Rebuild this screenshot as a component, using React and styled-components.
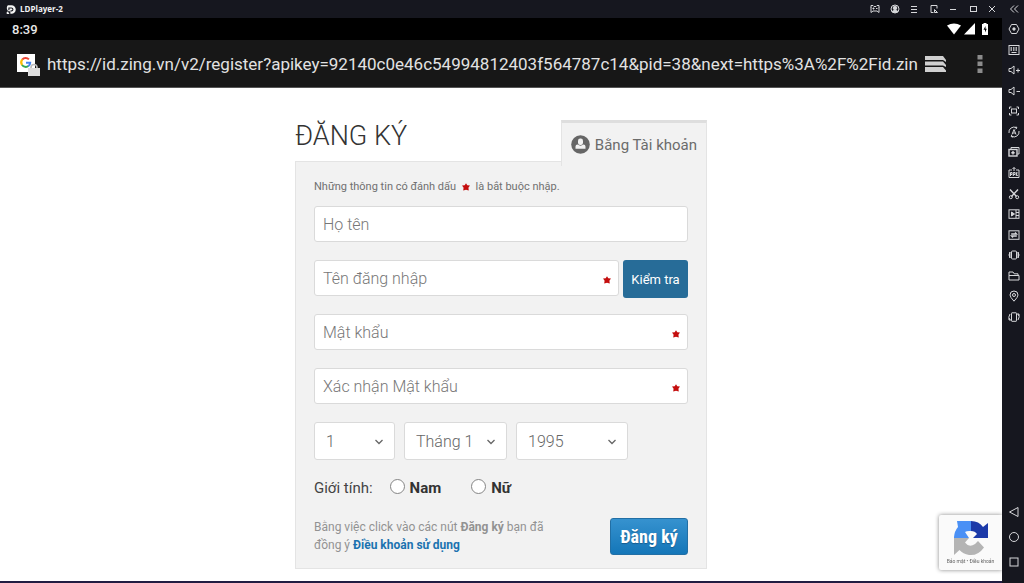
import React from "react";
import styled, { createGlobalStyle, css } from "styled-components";

const GlobalStyle = createGlobalStyle`
  * { box-sizing: border-box; }
  html, body { margin: 0; background: #16171f; }
  body, button, input, select { font-family: Roboto, "Noto Sans", sans-serif; }
`;

const Shell = styled.div`
  display: flex;
  min-height: 100vh;
  background: #16171f;
`;
const Main = styled.div`
  flex: 1;
  min-width: 0;
  display: flex;
  flex-direction: column;
  border-bottom: 2px solid #211c42;
`;
const TitleBar = styled.header`
  height: 18px;
  display: flex;
  align-items: center;
  justify-content: space-between;
  padding: 0 4px 0 6px;
  color: #f2f2f4;
  background: #16171f;
`;
const AppName = styled.div`
  display: flex;
  align-items: center;
  gap: 4px;
  font: 700 8px/12px "Open Sans", sans-serif;
`;
const WindowControls = styled.div`
  display: flex;
  width: 129px;
  justify-content: space-between;
`;
const IconButton = styled.button`
  display: flex;
  align-items: center;
  justify-content: center;
  width: 12px;
  height: 12px;
  padding: 0;
  border: 0;
  background: none;
  color: #d6d7da;
`;
const StatusBar = styled.div`
  height: 22px;
  display: flex;
  align-items: center;
  justify-content: space-between;
  padding: 0 12px;
  background: #000;
  color: #e8e8e8;
  font-size: 13px;
  font-weight: 500;
`;
const StatusIcons = styled.div`
  display: flex;
  align-items: center;
  gap: 3px;
`;
const AddressBar = styled.div`
  height: 48px;
  display: flex;
  align-items: center;
  padding: 0 11px 0 16px;
  background: #171717;
  border-bottom: 1px solid #555;
`;
const Url = styled.input`
  flex: 1;
  min-width: 0;
  height: 30px;
  margin: 0 3px 0 7px;
  padding: 0;
  border: 0;
  outline: 0;
  background: none;
  color: #e2e2e2;
  font-size: 17px;
`;
const BarButton = styled(IconButton)`
  width: 22px;
  height: 24px;
`;
const MenuButton = styled(BarButton)`
  margin-left: 22px;
`;

const Content = styled.main`
  flex: 1;
  background: #fff;
  padding: 32px 16px 12px;
`;
const Register = styled.div`
  max-width: 412px;
  margin: 0 auto;
`;
const Head = styled.div`
  display: flex;
  justify-content: space-between;
  align-items: flex-start;
`;
const Heading = styled.h1`
  margin: 0;
  color: #333;
  font-size: 27px;
  font-weight: 300;
  line-height: 32px;
`;
const Tab = styled.a`
  display: flex;
  align-items: center;
  gap: 5px;
  height: 46px;
  margin-bottom: -5px;
  padding: 0 9px;
  border: 1px solid #e4e4e4;
  border-top: 3px solid #dedede;
  border-bottom: 0;
  background: #f2f2f2;
  color: #6b6b6b;
  font-size: 15px;
  text-decoration: none;
  z-index: 1;
`;
const Panel = styled.form`
  padding: 16px 18px 13px;
  border: 1px solid #e4e4e4;
  background: #f2f2f2;
`;
const Note = styled.p`
  margin: 0 0 11px;
  color: #707070;
  font-size: 11px;
  line-height: 17px;
`;
const NoteStar = styled.span`
  margin: 0 3px;
  svg { vertical-align: -1px; }
`;
const Row = styled.div`
  display: flex;
  gap: ${(p) => p.$gap || 0}px;
  height: 36px;
  margin-bottom: 18px;
`;
const FieldBox = styled.label`
  position: relative;
  flex: 1;
  min-width: 0;
`;
const RequiredMark = styled.span`
  position: absolute;
  right: 8px;
  top: 16px;
  display: flex;
`;
const boxStyle = css`
  width: 100%;
  border: 1px solid #dadada;
  border-radius: 3px;
  background: #fff;
  font-size: 16px;
  font-weight: 300;
`;
const Input = styled.input`
  ${boxStyle}
  height: 36px;
  padding: 0 8px;
  display: block;
  color: #333;
  &::placeholder { color: #777; opacity: 1; }
`;
const CheckButton = styled.button`
  width: 65px;
  height: 38px;
  padding: 0;
  border: 0;
  border-radius: 3px;
  background: #276c98;
  color: #fff;
  font-size: 13px;
`;
const SelectBox = styled.label`
  position: relative;
  width: ${(p) => p.$width}px;
`;
const Select = styled.select`
  ${boxStyle}
  appearance: none;
  height: 38px;
  padding: 0 11px;
  color: #666;
`;
const Chevron = styled.svg`
  position: absolute;
  right: 11px;
  top: 15px;
  width: 10px;
  height: 10px;
  pointer-events: none;
`;
const Gender = styled.fieldset`
  display: flex;
  align-items: center;
  height: 20px;
  margin: 20px 0;
  padding: 0;
  border: 0;
  color: #444;
  font-size: 15px;
`;
const GenderTitle = styled.span`
  margin-right: 17px;
`;
const Choice = styled.label`
  display: flex;
  align-items: center;
  gap: 5px;
  margin-right: 30px;
  color: #333;
  font-weight: 700;
`;
const Radio = styled.input`
  appearance: none;
  width: 15px;
  height: 15px;
  margin: 0 0 4px;
  border: 1px solid #858585;
  border-radius: 50%;
  background: #fff;
  &:checked { box-shadow: inset 0 0 0 3px #fff; background: #276c98; }
`;
const Footer = styled.div`
  display: flex;
  justify-content: space-between;
  align-items: flex-start;
`;
const Terms = styled.p`
  margin: 0;
  max-width: 240px;
  color: #929292;
  font-size: 12px;
  line-height: 18px;
  a { color: #1b72b0; font-weight: 700; text-decoration: none; }
`;
const Submit = styled.button`
  width: 78px;
  height: 37px;
  padding: 0;
  border: 1px solid #226fa5;
  border-radius: 3px;
  background: linear-gradient(#3692cf, #1476b8);
  color: #fff;
  font-family: "Roboto Condensed", Roboto, sans-serif;
  font-size: 18px;
  font-weight: 700;
  text-shadow: 0 1px 1px #185d8e;
`;

const SideBar = styled.aside`
  width: 22px;
  display: flex;
  flex-direction: column;
  align-items: center;
  justify-content: space-between;
  padding: 3px 0 15px 2px;
`;
const Tools = styled.div`
  display: flex;
  flex-direction: column;
  gap: 8px;
`;
const ToolList = styled(Tools)`
  height: 300px;
  gap: 0;
  justify-content: space-between;
`;
const NavList = styled(Tools)`
  gap: 13px;
`;
const Captcha = styled.aside`
  position: fixed;
  right: 22px;
  bottom: 13px;
  width: 63px;
  height: 55px;
  display: flex;
  flex-direction: column;
  align-items: center;
  padding-top: 5px;
  border-radius: 2px 0 0 2px;
  background: #fafafa;
  box-shadow: 0 0 4px #888;
  clip-path: inset(-6px 0 -6px -6px);
  color: #666;
  font-size: 5px;
  line-height: 8px;
  white-space: nowrap;
  svg { margin-bottom: 1px; }
  a { color: inherit; text-decoration: none; }
`;

const Star = () => (
  <svg width="8" height="8" viewBox="0 0 8 8" aria-hidden="true">
    <path d="M4 0.2 5.3 2.2 8 2.6 6.4 4.7 6.8 7.6 4 6.7 1.2 7.6 1.6 4.7 0 2.6 2.7 2.2Z" fill="#c40d0d" />
  </svg>
);
const Line = ({ children }) => (
  <svg width="12" height="12" viewBox="0 0 12 12" fill="none" stroke="currentColor" strokeWidth="1" aria-hidden="true">
    {children}
  </svg>
);

const windowIcons = [
  ["Trò chơi", <path d="M2 4.5V9.5L4 8H8L10 9.5V4.5M2 5V2.5H4L5 3.5H7L8 2.5H10V5M3.5 5.5H5.5M4.5 4.5V6.5M7 5.5H8.5" />],
  ["Tài khoản", <><circle cx="6" cy="6" r="4" /><circle cx="6" cy="5" r="1.8" fill="currentColor" /><path d="M3 8.5Q6 5.5 9 8.5Q6 10.5 3 8.5Z" fill="currentColor" /></>],
  ["Trình đơn", <path d="M3 3.5H9M3 6.5H9M3 9.5H9" />],
  ["Cửa sổ nhỏ", <path d="M9 5.5V2.5H3V9.5H5.5M9.5 9.5H6.5V6.5M6.5 6.5L9.5 9.5" />],
  ["Thu nhỏ", <path d="M3 6.5H9" />],
  ["Phóng to", <rect x="3.5" y="3.5" width="6" height="5" />],
  ["Đóng", <path d="M3 3L9 9M9 3L3 9" />],
];
const tools = [
  ["Cài đặt", <><path d="M3.5 1.5H8.5L11 6L8.5 10.5H3.5L1 6Z" /><circle cx="6" cy="6" r="1.2" fill="currentColor" /></>],
  ["Bàn phím", <><rect x="1" y="1.5" width="10" height="9" /><path d="M2.5 4H9.5M2.5 6H9.5" strokeDasharray="1.5 1" strokeWidth="1.3" /><path d="M3.5 8.5H8.5" /></>],
  ["Tăng âm lượng", <path d="M1 4.5V7.5H3L6 10V2L3 4.5ZM8 6.5H12M10 4.5V8.5" />],
  ["Giảm âm lượng", <path d="M1 4.5V7.5H3L6 10V2L3 4.5ZM8.5 6.5H12" />],
  ["Toàn màn hình", <><rect x="3.5" y="4" width="5" height="4" /><path d="M1.5 4V2H3.5M8.5 2H10.5V4M10.5 8V10H8.5M3.5 10H1.5V8" /></>],
  ["Tự động", <><path d="M1 7A5 5 0 0 1 8.5 1.8M11 5A5 5 0 0 1 3.5 10.2M8 .5L9 2L7.5 3M4 9L3 10.2L4.5 11.5" /><path d="M4 8.5L6 3.5L8 8.5M4.7 7H7.3" /></>],
  ["Đa nhiệm", <><path d="M3 3V1.5H11V8H9.5" /><rect x="1" y="3.5" width="8" height="6.5" strokeWidth="1.4" /><path d="M5 5V8.5M3.3 6.8H6.7" strokeWidth="1.4" /></>],
  ["Cài APK", <><path d="M4 3H1V10.5H11V3H8M6 4V.5M4.5 2L6 .5L7.5 2" /><path d="M2.5 9V5.5H4V7.5H2.5M5.3 9V5.5H7V7.5H5.3M8.3 9V5M8.3 7L9.7 5.5M8.3 7L9.7 9" /></>],
  ["Cắt", <><path d="M2 1.5L8.5 8.5M10 1.5L3.5 8.5" strokeWidth="1.4" /><circle cx="2.8" cy="9.2" r="1.5" /><circle cx="9.2" cy="9.2" r="1.5" /></>],
  ["Quay phim", <><rect x="1" y="1.8" width="10" height="8.5" /><path d="M8 2V10M8 4.5H11M8 7.5H11" /><path d="M3.5 4V8L6.5 6Z" fill="currentColor" /></>],
  ["Đồng bộ", <><rect x="1" y="1.8" width="10" height="8.5" /><path d="M3.2 5H8.5L7 3.5M8.8 7H3.5L5 8.5" strokeWidth="1.3" /></>],
  ["Rung", <><rect x="3.5" y="2" width="5" height="8" rx="1" /><path d="M2 3Q0 6 2 9ZM10 3Q12 6 10 9Z" fill="currentColor" /></>],
  ["Thư mục", <path d="M1 10V2H5L6.2 3.8H10V5.5M1 5.5H11V10H1" />],
  ["Vị trí", <><path d="M6 11.2Q2 7 2 5A4 4 0 0 1 10 5Q10 7 6 11.2Z" /><circle cx="6" cy="5" r="1.5" /></>],
  ["Xoay", <><rect x="3.5" y="1.8" width="5" height="8.5" rx=".5" /><path d="M2 3Q-.5 6.5 2 9M0 8H2V10M10 9Q12.5 5.5 10 3M12 4H10V2" /></>],
];
const navIcons = [
  ["Quay lại", <path d="M10 1.5V10.5L1.5 6Z" />],
  ["Trang chủ", <circle cx="6" cy="6" r="4.5" />],
  ["Gần đây", <rect x="2" y="2" width="8" height="8" />],
];

const LdLogo = () => (
  <svg width="10" height="11" viewBox="0 0 11 11" aria-hidden="true">
    <path d="M2 .7H6A4.7 4.7 0 0 1 6 10.2H4.8V7.5H2.8A4.7 4.7 0 0 1 2 .7Z" fill="#f5f5f5" />
    <path d="M3.2 6.2V3.8H6A1.6 1.6 0 0 1 6 7H5" fill="none" stroke="#16171f" strokeWidth="1.2" />
    <path d="M.5 9L2 7.5L3.8 10.5H1Z" fill="#f5f5f5" />
  </svg>
);
const SiteIcon = () => (
  <svg width="24" height="24" viewBox="0 0 24 24" aria-hidden="true">
    <rect x="1" y="2" width="18" height="18" fill="#fff" />
    <g fill="none" strokeWidth="2">
      <path d="M12.9 7.4A4.5 4.5 0 0 0 6.2 7.7" stroke="#ea4335" />
      <path d="M6.3 7.5A4.5 4.5 0 0 0 6.2 13.2" stroke="#fbbc05" />
      <path d="M6.1 13A4.5 4.5 0 0 0 12.5 14" stroke="#34a853" />
      <path d="M12.3 14.2A4.5 4.5 0 0 0 14.2 10.7H10" stroke="#4285f4" />
    </g>
    <path d="M15 17V15.5A3 3 0 0 1 21 15.5V17" fill="none" stroke="#bbb" strokeWidth="1.6" />
    <rect x="12" y="16" width="12" height="8" fill="#ddd" />
  </svg>
);
const UserIcon = () => (
  <svg width="19" height="19" viewBox="0 0 19 19" aria-hidden="true">
    <circle cx="9.5" cy="9.5" r="9.3" fill="#666" />
    <rect x="7" y="3.5" width="5" height="6.5" rx="2.2" fill="#f2f2f2" />
    <path d="M4.5 13.8V11.5Q4.5 9.8 6.6 9.6Q9.5 11.8 12.400 9.600Q14.500 9.800 14.500 11.500V13.800Z" fill="#f2f2f2" />
  </svg>
);
const CaptchaLogo = () => (
  <svg width="36" height="36" viewBox="0 0 36 36" aria-hidden="true">
    <path d="M18 1V11Q14 10.500 12 12L16 18H1V17Q1.500 11 5 7L4 1Z" fill="#4a90f5" />
    <path d="M18 1Q26 1 30 7L35 3V18H20L24 14Q22 11 18 11Z" fill="#1c3aa9" />
    <path d="M1 18H16L12 22.500Q16 28 22 24L25 21L31 27.500Q25 36 16 35Q10 34 6.500 30L1 35Z" fill="#b4b4b4" />
  </svg>
);

function Field({ label, type = "text", required }) {
  return (
    <FieldBox>
      <Input type={type} placeholder={label} aria-label={label} required={required} />
      {required && <RequiredMark><Star /></RequiredMark>}
    </FieldBox>
  );
}
function Dropdown({ label, width, options }) {
  return (
    <SelectBox $width={width}>
      <Select aria-label={label}>
        {options.map((o) => <option key={o}>{o}</option>)}
      </Select>
      <Chevron viewBox="0 0 10 10"><path d="M1.5 3L5 6.5L8.5 3" fill="none" stroke="#666" strokeWidth="1.3" /></Chevron>
    </SelectBox>
  );
}
const IconButtons = ({ items }) =>
  items.map(([name, art]) => (
    <IconButton key={name} type="button" aria-label={name}><Line>{art}</Line></IconButton>
  ));

export default function App() {
  return (
    <>
      <GlobalStyle />
      <Shell>
        <Main>
          <TitleBar>
            <AppName><LdLogo />LDPlayer-2</AppName>
            <WindowControls><IconButtons items={windowIcons} /></WindowControls>
          </TitleBar>
          <StatusBar>
            <span>8:39</span>
            <StatusIcons>
              <svg width="14" height="12" viewBox="0 0 14 12" aria-hidden="true"><path d="M0 2.5Q7-1.5 14 2.5L7 11.5Z" fill="#fff" /></svg>
              <svg width="11" height="12" viewBox="0 0 11 12" aria-hidden="true"><path d="M11 0V11.5H0Z" fill="#fff" /></svg>
              <svg width="12" height="12" viewBox="0 0 12 12" aria-hidden="true"><path d="M5.5 0H8.5V1H10V12H4V1H5.5Z" fill="#fff" /><path d="M7.5 3L5.5 6.8H7V9.5L8.8 5.7H7.5Z" fill="#000" /></svg>
            </StatusIcons>
          </StatusBar>
          <AddressBar>
            <SiteIcon />
            <Url readOnly aria-label="URL" value="https://id.zing.vn/v2/register?apikey=92140c0e46c54994812403f564787c14&pid=38&next=https%3A%2F%2Fid.zin" />
            <BarButton type="button" aria-label="Thẻ">
              <svg width="22" height="18" viewBox="0 0 22 18" aria-hidden="true">
                <path d="M0 1H18L21 5V7L18 5H0ZM0 6.5H18L21 10V12L18 10.5H0ZM0 12H18L21 15.5V17H0Z" fill="#d0d0d0" />
              </svg>
            </BarButton>
            <MenuButton type="button" aria-label="Tùy chọn">
              <svg width="6" height="20" viewBox="0 0 6 20" aria-hidden="true"><path d="M.5 1H5.5V5.5H.5ZM.5 7.5H5.5V12H.5ZM.5 14.5H5.5V19H.5Z" fill="#8c8c8c" /></svg>
            </MenuButton>
          </AddressBar>
          <Content>
            <Register>
              <Head>
                <Heading>ĐĂNG KÝ</Heading>
                <Tab href="#account"><UserIcon />Bằng Tài khoản</Tab>
              </Head>
              <Panel id="account" onSubmit={(e) => e.preventDefault()}>
                <Note>Những thông tin có đánh dấu <NoteStar><Star /></NoteStar> là bắt buộc nhập.</Note>
                <Row><Field label="Họ tên" /></Row>
                <Row $gap={4}>
                  <Field label="Tên đăng nhập" required />
                  <CheckButton type="button">Kiểm tra</CheckButton>
                </Row>
                <Row><Field label="Mật khẩu" type="password" required /></Row>
                <Row><Field label="Xác nhận Mật khẩu" type="password" required /></Row>
                <Row $gap={9}>
                  <Dropdown label="Ngày" width={81} options={["1", "2", "3"]} />
                  <Dropdown label="Tháng" width={103} options={["Tháng 1", "Tháng 2"]} />
                  <Dropdown label="Năm" width={112} options={["1995", "1996"]} />
                </Row>
                <Gender aria-label="Giới tính">
                  <GenderTitle>Giới tính:</GenderTitle>
                  <Choice><Radio type="radio" name="gender" />Nam</Choice>
                  <Choice><Radio type="radio" name="gender" />Nữ</Choice>
                </Gender>
                <Footer>
                  <Terms>Bằng việc click vào các nút <b>Đăng ký</b> bạn đã đồng ý <a href="#terms">Điều khoản sử dụng</a></Terms>
                  <Submit type="submit">Đăng ký</Submit>
                </Footer>
              </Panel>
            </Register>
          </Content>
        </Main>
        <SideBar>
          <Tools>
            <IconButtons items={[["Thu gọn", <path d="M6 2.5L2.5 6L6 9.5M10 2.5L6.5 6L10 9.5" />]]} />
            <ToolList><IconButtons items={tools} /></ToolList>
          </Tools>
          <NavList><IconButtons items={navIcons} /></NavList>
        </SideBar>
      </Shell>
      <Captcha>
        <CaptchaLogo />
        <span><a href="#privacy">Bảo mật</a> • <a href="#conditions">Điều khoản</a></span>
      </Captcha>
    </>
  );
}
